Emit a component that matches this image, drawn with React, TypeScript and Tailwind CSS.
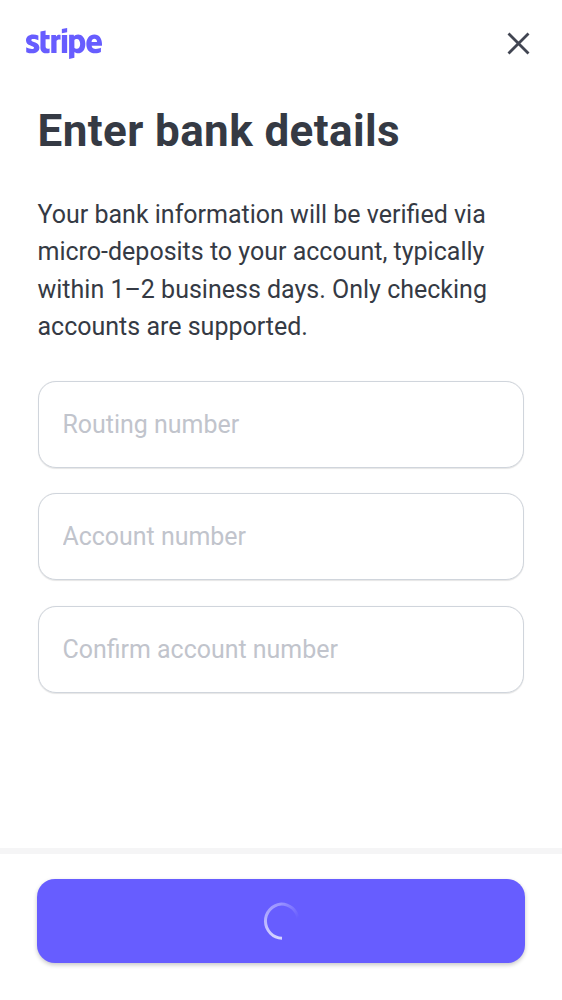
function Field({ placeholder }: { placeholder: string }) {
  return (
    <input
      aria-label={placeholder}
      placeholder={placeholder}
      className="block h-[87px] w-full rounded-[18px] border-[1.5px] border-[#d0d5dc] bg-white px-[24px] text-[24.95px] text-[#30313d] shadow-[0_0.5px_1px_rgba(0,0,0,0.1)] outline-none placeholder:text-[#c1c4cc]"
    />
  );
}

function StripeLogo() {
  return (
    <svg width="76" height="31" viewBox="54 36 360 150" fill="#675dff" preserveAspectRatio="none" aria-label="stripe">
      <path d="M414 113.4c0-25.6-12.4-45.8-36.1-45.8-23.8 0-38.2 20.2-38.2 45.6 0 30.1 17 45.3 41.4 45.3 11.9 0 20.9-2.7 27.7-6.5v-20c-6.8 3.4-14.6 5.5-24.5 5.5-9.7 0-18.3-3.4-19.4-15.2h48.9c0-1.3.2-6.5.2-8.9zm-49.4-9.5c0-11.3 6.9-16 13.2-16 6.1 0 12.6 4.7 12.6 16h-25.8zM301.1 67.6c-9.8 0-16.1 4.6-19.6 7.8l-1.3-6.2h-22v116.6l25-5.3.1-28.3c3.6 2.6 8.9 6.3 17.7 6.3 17.9 0 34.2-14.4 34.2-46.1-.1-29-16.6-44.8-34.1-44.8zm-6 68.9c-5.9 0-9.4-2.1-11.8-4.7l-.1-37.1c2.6-2.9 6.2-4.9 11.9-4.9 9.1 0 15.4 10.2 15.4 23.3 0 13.4-6.2 23.4-15.4 23.4zM223.8 61.7l25.1-5.4V36l-25.1 5.3zM223.8 69.3h25.1v87.5h-25.1zM196.9 76.7l-1.6-7.4h-21.6v87.5h25V97.5c5.9-7.7 15.9-6.3 19-5.2v-23c-3.2-1.2-14.9-3.4-20.8 7.4zM146.9 47.6l-24.4 5.2-.1 80.1c0 14.8 11.1 25.7 25.9 25.7 8.2 0 14.2-1.5 17.5-3.3V135c-3.2 1.3-19 5.9-19-8.9V90.6h19V69.3h-19l.1-21.7zM79.3 94.7c0-3.9 3.2-5.4 8.5-5.4 7.6 0 17.2 2.3 24.8 6.4V72.2c-8.3-3.3-16.5-4.6-24.8-4.6C67.5 67.6 54 78.2 54 95.9c0 27.6 38 23.2 38 35.1 0 4.6-4 6.1-9.6 6.1-8.3 0-18.9-3.4-27.3-8v23.8c9.3 4 18.7 5.7 27.3 5.7 20.8 0 35.1-10.3 35.1-28.2-.1-29.8-38.2-24.5-38.2-35.7z" />
    </svg>
  );
}

function Spinner() {
  return (
    <svg width="38" height="38" viewBox="0 0 38 38" fill="none" strokeWidth="3">
      <defs>
        <linearGradient id="tail" gradientUnits="userSpaceOnUse" x1="19" y1="0" x2="36" y2="16">
          <stop stopColor="white" stopOpacity="0.34" />
          <stop offset="1" stopColor="white" stopOpacity="0" />
        </linearGradient>
        <linearGradient id="head" gradientUnits="userSpaceOnUse" x1="19" y1="37" x2="19" y2="1">
          <stop stopColor="white" stopOpacity="0.74" />
          <stop offset="1" stopColor="white" stopOpacity="0.34" />
        </linearGradient>
      </defs>
      <path d="M20 36.3A17.25 17.25 0 0 1 19 1.9" stroke="url(#head)" />
      <path d="M19 1.9A17.25 17.25 0 0 1 36.1 17" stroke="url(#tail)" />
    </svg>
  );
}

export default function App() {
  return (
    <div className="flex h-[1000px] w-[562px] flex-col bg-white font-['Roboto',sans-serif] text-[#353a44]">
      <header className="flex h-[87px] items-center justify-between pr-[31px] pl-[26px]">
        <StripeLogo />
        <button aria-label="Close">
          <svg width="25" height="25" viewBox="0 0 25 25" stroke="#414552" strokeWidth="2.8" fill="none">
            <path d="M2.5 2.5l20 20M22.5 2.5l-20 20" />
          </svg>
        </button>
      </header>
      <main className="flex flex-1 flex-col pt-[17px] pr-[38px] pl-[37.5px]">
        <h1 className="text-[44px] leading-[55px] font-bold tracking-[0.4px] whitespace-nowrap">Enter bank details</h1>
        <p className="mt-[36.5px] text-[25px] leading-[37.5px] whitespace-nowrap">
          Your bank information will be verified via<br />
          micro-deposits to your account, typically<br />
          within 1–2 business days. Only checking<br />
          accounts are supported.
        </p>
        <form className="mt-[35px] flex flex-col gap-[25.5px]">
          <Field placeholder="Routing number" />
          <Field placeholder="Account number" />
          <Field placeholder="Confirm account number" />
        </form>
      </main>
      <footer className="h-[152px] border-t-[6px] border-[#f5f5f6] px-[37px] pt-[25px]">
        <button aria-label="Submitting" className="flex h-[84px] w-full items-center justify-center rounded-[18px] bg-[#675dff] shadow-[0_2px_4px_rgba(0,0,0,0.22)]">
          <Spinner />
        </button>
      </footer>
    </div>
  );
}
